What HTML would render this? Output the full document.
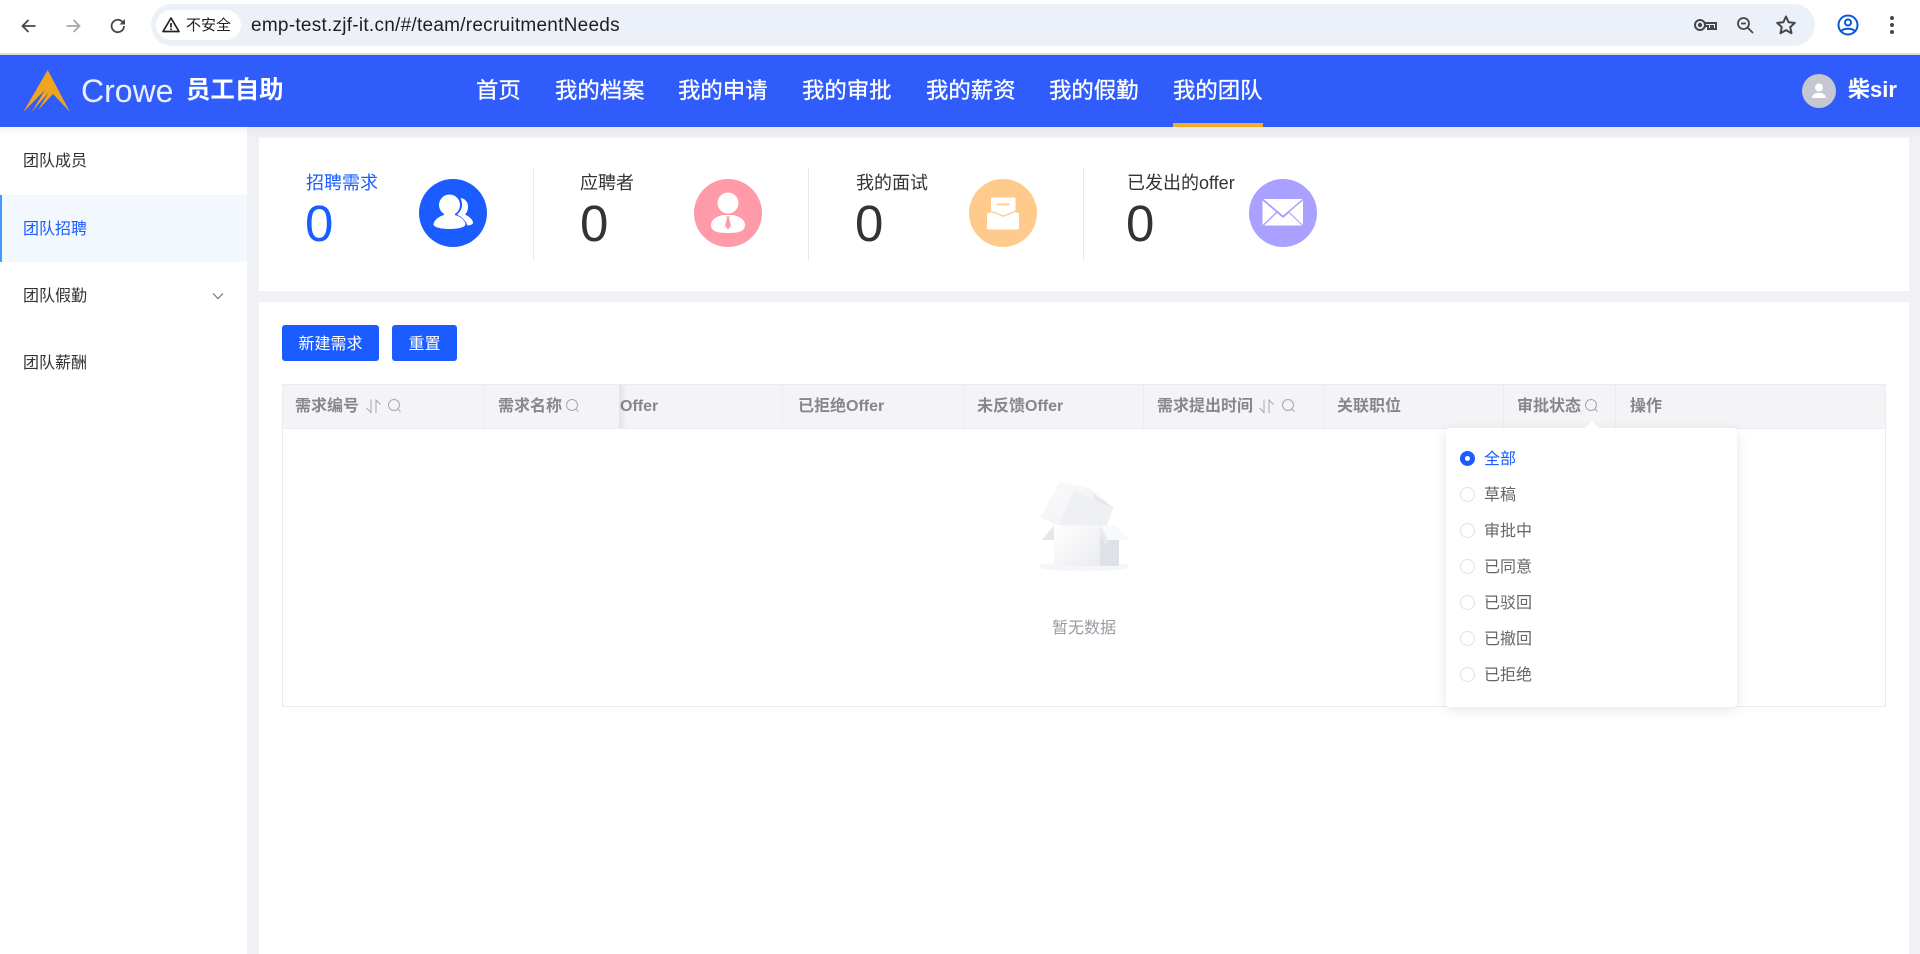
<!DOCTYPE html>
<html lang="zh-CN">
<head>
<meta charset="utf-8">
<title>团队招聘</title>
<style>
*{box-sizing:border-box;margin:0;padding:0}
html,body{width:1920px;height:954px;overflow:hidden;background:#f0f1f4;font-family:"Liberation Sans","Noto Sans CJK SC",sans-serif;color:#333}
.a{position:absolute}
.t{position:absolute;white-space:nowrap;line-height:1}
svg{position:absolute;display:block}
.nav{position:absolute;top:78px;font-size:22.4px;line-height:26px;color:#fff;white-space:nowrap;-webkit-text-stroke:.3px #fff}
.side{position:absolute;left:23px;font-size:16px;line-height:20px;color:#333;white-space:nowrap}
.stat{position:absolute;top:173px;font-size:18px;line-height:20px;color:#333;white-space:nowrap}
.num{position:absolute;top:195px;font-size:51px;line-height:58px;color:#333}
.c{position:absolute;top:179px;width:68px;height:68px;border-radius:50%}
.th{position:absolute;top:397px;font-size:16px;line-height:20px;font-weight:bold;color:#85878d;white-space:nowrap}
.ln{position:absolute;top:385px;width:1px;height:43px;background:#ebebf1}
.rd{position:absolute;left:1460px;width:15px;height:15px;border-radius:50%;border:1px solid #dfdfe6;background:#fff}
.rt{position:absolute;left:1484px;font-size:16px;line-height:20px;color:#666;white-space:nowrap}
.btn{position:absolute;top:325px;height:36px;background:#1a5cff;border-radius:3px;color:#fff;font-size:16px;line-height:39px;text-align:center}
</style>
</head>
<body>
<!-- browser chrome -->
<div class="a" style="left:0;top:0;width:1920px;height:53px;background:#fff"></div>
<div class="a" style="left:0;top:53px;width:1920px;height:2px;background:#d9dce1"></div>
<svg style="left:18px;top:15px" width="22" height="22" viewBox="0 0 22 22" fill="none" stroke="#474747" stroke-width="1.800"><path d="M17.500 11H4.500M10.500 5L4.500 11l6 6"/></svg>
<svg style="left:62px;top:15px" width="22" height="22" viewBox="0 0 22 22" fill="none" stroke="#a8a8a8" stroke-width="1.800"><path d="M4.500 11h13M11.500 5l6 6-6 6"/></svg>
<svg style="left:107px;top:15px" width="22" height="22" viewBox="0 0 22 22" fill="none" stroke="#474747" stroke-width="1.800"><path d="M17 11a6.200 6.200 0 1 1-1.900-4.500L17.500 9"/><path d="M18 4v5.500h-5.500" fill="#474747" stroke="none"/></svg>
<div class="a" style="left:151px;top:4px;width:1664px;height:42px;border-radius:21px;background:#ecf0f9"></div>
<div class="a" style="left:156px;top:10px;width:85px;height:30px;border-radius:15px;background:#fff"></div>
<svg style="left:161px;top:15px" width="20" height="20" viewBox="0 0 20 20" fill="none" stroke="#222" stroke-width="1.700"><path d="M10 3L18 16.500H2z" stroke-linejoin="round"/><path d="M10 8v4.500M10 13.500v1.500"/></svg>
<div class="t" style="left:186px;top:18px;font-size:15px;color:#222">不安全</div>
<div class="t" id="url" style="left:251px;top:16px;font-size:19px;line-height:20px;color:#1f1f1f;letter-spacing:.26px">emp-test.zjf-it.cn/#/team/recruitmentNeeds</div>
<svg style="left:1693px;top:15px" width="24" height="20" viewBox="0 0 24 20" fill="none" stroke="#474747" stroke-width="2"><circle cx="7" cy="10" r="5"/><circle cx="7" cy="10" r="1.200" fill="#474747"/><path d="M12 8h11v6h-3v-3h-2v3h-3v-3h-3"/></svg>
<svg style="left:1734px;top:14px" width="22" height="22" viewBox="0 0 22 22" fill="none" stroke="#474747" stroke-width="1.800"><circle cx="9.500" cy="9.500" r="5.500"/><path d="M7 9.500h5M13.500 13.500L19 19"/></svg>
<svg style="left:1775px;top:14px" width="22" height="22" viewBox="0 0 22 22" fill="none" stroke="#474747" stroke-width="2"><path d="M11 2.500l2.600 5.700 6.200.7-4.600 4.200 1.300 6.100-5.500-3.100-5.500 3.100 1.300-6.100L2.200 8.900l6.200-.7z" stroke-linejoin="round"/></svg>
<svg style="left:1837px;top:14px" width="22" height="22" viewBox="0 0 22 22" fill="none" stroke="#0b57d0" stroke-width="2"><circle cx="11" cy="11" r="9.500"/><circle cx="11" cy="8.500" r="3"/><path d="M4.500 17c2-3 11-3 13 0"/></svg>
<svg style="left:1886px;top:14px" width="12" height="22" viewBox="0 0 12 22" fill="#474747"><circle cx="6" cy="4" r="2"/><circle cx="6" cy="11" r="2"/><circle cx="6" cy="18" r="2"/></svg>

<!-- header -->
<div class="a" style="left:0;top:55px;width:1920px;height:72px;background:#2f5cfa"></div>
<svg style="left:20px;top:66px" width="54" height="50" viewBox="0 0 54 50"><path d="M27.700 4L50 46 33 28 18 44 29 26 11.700 46 25 24 3.300 46z" fill="#f0a51e"/></svg>
<div class="t" style="left:81px;top:73px;font-size:32px;line-height:37px;color:#fff;font-weight:normal;opacity:.9">Crowe</div>
<div class="t" style="left:186px;top:77px;font-size:24.400px;line-height:28px;color:#fff;font-weight:bold">员工自助</div>
<div class="nav" style="left:476px">首页</div>
<div class="nav" style="left:555px">我的档案</div>
<div class="nav" style="left:678px">我的申请</div>
<div class="nav" style="left:802px">我的审批</div>
<div class="nav" style="left:926px">我的薪资</div>
<div class="nav" style="left:1049px">我的假勤</div>
<div class="nav" style="left:1173px">我的团队</div>
<div class="a" style="left:1173px;top:123px;width:90px;height:4px;background:#f0ad2a"></div>
<div class="a" style="left:1802px;top:74px;width:34px;height:34px;border-radius:50%;background:#c5c8d0"></div>
<svg style="left:1802px;top:74px" width="34" height="34" viewBox="0 0 34 34" fill="#fff"><circle cx="17" cy="13.500" r="4"/><path d="M10 24c0-7 14-7 14 0z"/></svg>
<div class="t" style="left:1848px;top:77px;font-size:22px;line-height:26px;color:#fff;font-weight:bold">柴sir</div>

<!-- sidebar -->
<div class="a" style="left:0;top:127px;width:247px;height:827px;background:#fff"></div>
<div class="a" style="left:0;top:195px;width:247px;height:67px;background:#f3f8ff"></div>
<div class="a" style="left:0;top:195px;width:2px;height:67px;background:#4299ff"></div>
<div class="side" style="top:152px">团队成员</div>
<div class="side" style="top:220px;color:#1a5cff">团队招聘</div>
<div class="side" style="top:287px">团队假勤</div>
<div class="side" style="top:354px">团队薪酬</div>
<svg style="left:212px;top:291px" width="12" height="10" viewBox="0 0 12 10" fill="none" stroke="#666" stroke-width="1"><path d="M1 2.500l5 5 5-5"/></svg>
<div class="a" style="left:0;top:127px;width:1920px;height:10px;background:linear-gradient(rgba(0,0,0,.035),rgba(0,0,0,0))"></div>

<!-- stat card -->
<div class="a" style="left:259px;top:138px;width:1650px;height:153px;background:#fff"></div>
<div class="a" style="left:533px;top:168px;width:1px;height:93px;background:#e8e8e8"></div>
<div class="a" style="left:808px;top:168px;width:1px;height:93px;background:#e8e8e8"></div>
<div class="a" style="left:1083px;top:168px;width:1px;height:93px;background:#e8e8e8"></div>
<div class="stat" style="left:306px;color:#1a5cff">招聘需求</div>
<div class="stat" style="left:580px">应聘者</div>
<div class="stat" style="left:856px">我的面试</div>
<div class="stat" style="left:1127px">已发出的offer</div>
<div class="num" style="left:305px;color:#1a5cff">0</div>
<div class="num" style="left:580px">0</div>
<div class="num" style="left:855px">0</div>
<div class="num" style="left:1126px">0</div>

<div class="c" style="left:419px;background:#1a5cff"></div>
<svg style="left:419px;top:179px" width="68" height="68" viewBox="0 0 68 68" fill="#fff"><circle cx="30.500" cy="26" r="10.500"/><path d="M25 33h11v3c5 1.500 9.500 4.500 10.500 9 .5 3-7 5-16 5s-16.500-2-16-5c1-4.500 5.500-7.500 10.500-9z"/><path d="M41.500 19c5 .5 7.500 4.500 7.500 8.500 0 3.500-1 6-3 8 4 2 7.500 4.500 8 8 .2 1.700-2 2.700-5.500 3-1.500-4.500-5.500-8.500-10.500-11 2.500-2 4.500-5 5-8.500.3-3-.5-5.500-1.500-8z"/></svg>

<div class="c" style="left:694px;background:#ff9aa8"></div>
<svg style="left:694px;top:179px" width="68" height="68" viewBox="0 0 68 68" fill="#fff"><circle cx="34" cy="24" r="10.500"/><path d="M29 36h10c7 1.500 11.500 4.500 12 9.500.2 3-1.500 6-4.500 7-3.500 1.200-8 1.500-12.500 1.500s-9-.3-12.500-1.500c-3-1-4.700-4-4.500-7 .5-5 5-8 12-9.500z"/><path d="M32.300 37.500h3.400l-.6 2.500 1.900 7-3 3.500-3-3.500 1.900-7z" fill="#ff9aa8"/></svg>

<div class="c" style="left:969px;background:#ffcb8c"></div>
<svg style="left:969px;top:179px" width="68" height="68" viewBox="0 0 68 68" fill="#fff"><path d="M22 20a1.500 1.500 0 0 1 1.500-1.500h21.500a1.500 1.500 0 0 1 1.500 1.500v11.500l-12.200 5-12.300-5z"/><path d="M18 34.500l4.500-1.500 11.800 5 11.700-5 4 1.500V49a1.500 1.500 0 0 1-1.500 1.500h-29A1.500 1.500 0 0 1 18 49z"/><rect x="27.500" y="24.500" width="13" height="1.800" fill="#ffcb8c"/></svg>

<div class="c" style="left:1249px;background:#a9a0ff"></div>
<svg style="left:1249px;top:179px" width="68" height="68" viewBox="0 0 68 68" fill="#fff"><path d="M14.500 20h39L34 36.500z"/><path d="M13.500 21.500l13.500 11.500-13.500 13z"/><path d="M54 21.500l-13.500 11.500 13.500 13z"/><path d="M15 46.500l13-12.500 6 5 6-5 13 12.500z"/></svg>

<!-- main card -->
<div class="a" style="left:259px;top:302px;width:1650px;height:652px;background:#fff"></div>
<div class="btn" style="left:282px;width:97px">新建需求</div>
<div class="btn" style="left:392px;width:65px">重置</div>

<!-- table -->
<div class="a" style="left:282px;top:384px;width:1604px;height:323px;border:1px solid #ebebf1;background:#fff"></div>
<div class="a" style="left:283px;top:385px;width:1602px;height:43px;background:#f4f4f6"></div>
<div class="a" style="left:283px;top:428px;width:1602px;height:1px;background:#ebebf1"></div>
<div class="ln" style="left:782px"></div>
<div class="ln" style="left:963px"></div>
<div class="ln" style="left:1143px"></div>
<div class="ln" style="left:1323px"></div>
<div class="ln" style="left:1503px"></div>
<div class="ln" style="left:1615px"></div>
<div class="th" style="left:620px">Offer</div>
<div class="th" style="left:798px">已拒绝Offer</div>
<div class="th" style="left:977px">未反馈Offer</div>
<div class="th" style="left:1157px">需求提出时间</div>
<div class="th" style="left:1337px">关联职位</div>
<div class="th" style="left:1517px">审批状态</div>
<div class="th" style="left:1630px">操作</div>
<div class="a" style="left:619px;top:385px;width:8px;height:43px;background:linear-gradient(90deg,rgba(0,0,0,.07),rgba(0,0,0,0))"></div>
<div class="a" style="left:283px;top:385px;width:336px;height:43px;background:#f4f4f6"></div>
<div class="ln" style="left:483px"></div>
<div class="th" style="left:295px">需求编号</div>
<div class="th" style="left:498px">需求名称</div>

<svg style="left:365px;top:398px" width="17" height="16" viewBox="0 0 17 16" fill="none" stroke="#a6a8ad" stroke-width="1"><path d="M6 1.500v13L1.500 10M11 15V2l4.500 4.500"/></svg>
<svg style="left:387px;top:398px" width="15" height="15" viewBox="0 0 15 15" fill="none" stroke="#a6a8ad" stroke-width="1"><circle cx="7" cy="7" r="5.500"/><path d="M10.800 11l2.700 2.700"/></svg>
<svg style="left:565px;top:398px" width="15" height="15" viewBox="0 0 15 15" fill="none" stroke="#a6a8ad" stroke-width="1"><circle cx="7" cy="7" r="5.500"/><path d="M10.800 11l2.700 2.700"/></svg>
<svg style="left:1258px;top:398px" width="17" height="16" viewBox="0 0 17 16" fill="none" stroke="#a6a8ad" stroke-width="1"><path d="M6 1.500v13L1.500 10M11 15V2l4.500 4.500"/></svg>
<svg style="left:1281px;top:398px" width="15" height="15" viewBox="0 0 15 15" fill="none" stroke="#a6a8ad" stroke-width="1"><circle cx="7" cy="7" r="5.500"/><path d="M10.800 11l2.700 2.700"/></svg>
<svg style="left:1584px;top:398px" width="15" height="15" viewBox="0 0 15 15" fill="none" stroke="#a6a8ad" stroke-width="1"><circle cx="7" cy="7" r="5.500"/><path d="M10.800 11l2.700 2.700"/></svg>

<!-- empty -->
<svg style="left:1000px;top:460px" width="170" height="190" viewBox="0 0 510 570">
<defs><linearGradient id="g1" x1="0" y1="0" x2="1" y2="1"><stop offset="0" stop-color="#fff"/><stop offset="1" stop-color="#eaebef"/></linearGradient>
<linearGradient id="g2" x1="0" y1="0" x2="1" y2="1"><stop offset="0" stop-color="#fafafb"/><stop offset="1" stop-color="#f0f1f3"/></linearGradient></defs>
<ellipse cx="252" cy="320" rx="136" ry="14" fill="#f5f6fa"/>
<path d="M180 64l90 22 70 56-20 54H176l-56-24z" fill="url(#g2)"/>
<path d="M222 92l118 50-20 54H176z" fill="#eff0f3"/>
<path d="M276 100l64 42-54-20z" fill="#e6e7ea"/>
<path d="M162 197l-37 43h37z" fill="#e6e7ea"/>
<path d="M162 197h138v121H162z" fill="url(#g1)"/>
<path d="M300 197l57 43v78h-57z" fill="#dfe1e8"/>
<path d="M300 197h50l36 43h-63z" fill="#f8f9fb"/>
<path d="M300 197l23 43v16l-23-24z" fill="#e9eaee"/>
</svg>
<div class="t" style="left:1052px;top:621px;font-size:16px;color:#9a9ca3">暂无数据</div>

<!-- dropdown -->
<div class="a" style="left:1446px;top:428px;width:291px;height:279px;background:#fff;border-radius:3px;box-shadow:0 3px 12px rgba(0,0,0,.1)"></div>
<svg style="left:1583px;top:421px" width="18" height="8" viewBox="0 0 18 8"><path d="M9 0l8 8H1z" fill="#fff"/></svg>
<div class="rd" style="top:451px;background:#1a5cff;border-color:#1a5cff"></div>
<div class="a" style="left:1465px;top:456px;width:5px;height:5px;border-radius:50%;background:#fff"></div>
<div class="rt" style="top:450px;color:#1a5cff">全部</div>
<div class="rd" style="top:487px"></div><div class="rt" style="top:486px">草稿</div>
<div class="rd" style="top:523px"></div><div class="rt" style="top:522px">审批中</div>
<div class="rd" style="top:559px"></div><div class="rt" style="top:558px">已同意</div>
<div class="rd" style="top:595px"></div><div class="rt" style="top:594px">已驳回</div>
<div class="rd" style="top:631px"></div><div class="rt" style="top:630px">已撤回</div>
<div class="rd" style="top:667px"></div><div class="rt" style="top:666px">已拒绝</div>
</body>
</html>
